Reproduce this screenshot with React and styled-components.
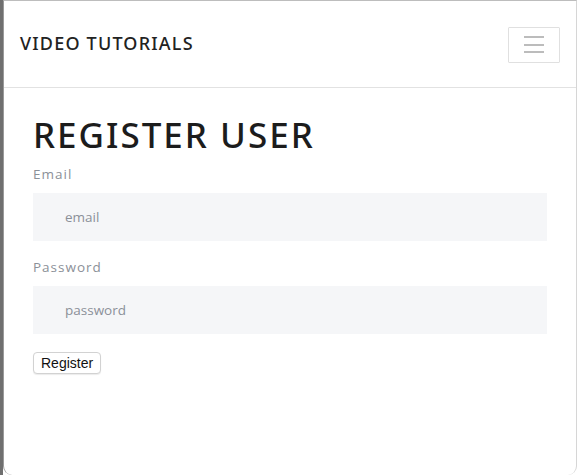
import React from "react";
import styled, { createGlobalStyle } from "styled-components";

const Global = createGlobalStyle`
  html, body { margin: 0; padding: 0; background: #fff; }
  body { font-family: "Open Sans", "Noto Sans", sans-serif; }
  * { box-sizing: border-box; }
`;

const Desk = styled.div`
  display: flex;
  height: 475px;
  width: 577px;
  background: linear-gradient(to right, #6f6f6f 0 3px, #ffffff 3px);
`;

const Win = styled.div`
  flex: 1;
  display: flex;
  flex-direction: column;
  margin-left: 3px;
  border-left: 1px solid #9a9a9a;
  border-top: 1px solid #bdbdbd;
  border-right: 1px solid #d6d6d6;
  border-bottom-left-radius: 9px;
  border-bottom-right-radius: 9px;
  background: #fff;
  overflow: hidden;
`;

const Navbar = styled.nav`
  height: 87px;
  flex: none;
  display: flex;
  align-items: center;
  justify-content: space-between;
  padding: 0 16px;
  border-bottom: 1px solid #e2e2e2;
`;

const Brand = styled.a`
  font-family: "Noto Sans", sans-serif;
  font-size: 18px;
  font-weight: 500;
  letter-spacing: 1.2px;
  color: #222;
  text-decoration: none;
  margin-top: -3px;
`;

const Toggler = styled.button`
  width: 52px;
  height: 36px;
  border: 1px solid #e0e0e0;
  background: #fff;
  border-radius: 1px;
  display: flex;
  flex-direction: column;
  align-items: center;
  justify-content: center;
  gap: 5.5px;
  padding: 0;
  margin-top: 1px;
`;

const Bar = styled.span`
  display: block;
  width: 20px;
  height: 2px;
  background: #bcbcbc;
`;

const Main = styled.main`
  padding: 25px 29px 0 29px;
  display: flex;
  flex-direction: column;
`;

const Title = styled.h1`
  margin: 0 0 8px;
  font-family: "Noto Sans", sans-serif;
  font-size: 35px;
  font-weight: 500;
  letter-spacing: 2px;
  line-height: 44px;
  color: #1c1c1c;
`;

const Label = styled.label`
  display: block;
  font-size: 13.5px;
  letter-spacing: 1px;
  color: #8b9098;
  line-height: 18px;
  margin-bottom: 10px;
`;

const Field = styled.input`
  display: block;
  width: 100%;
  height: 48px;
  border: none;
  background: #f5f6f8;
  padding: 0 32px;
  font-family: "Open Sans", sans-serif;
  font-size: 13.5px;
  color: #333;
  margin-bottom: 17px;
  outline: none;
  &::placeholder { color: #8b9098; }
`;

const Submit = styled.button`
  align-self: flex-start;
  margin-top: 1px;
  height: 22px;
  padding: 0 7px;
  background: #fff;
  border: 1px solid #d2d2d2;
  border-radius: 4px;
  box-shadow: 0 1px 1px rgba(0,0,0,0.08);
  font-family: "Liberation Sans", Arial, sans-serif;
  font-size: 14px;
  color: #111;
`;

export default function App() {
  return (
    <>
      <Global />
      <Desk>
        <Win>
          <Navbar>
            <Brand href="#">VIDEO TUTORIALS</Brand>
            <Toggler aria-label="menu">
              <Bar />
              <Bar />
              <Bar />
            </Toggler>
          </Navbar>
          <Main>
            <Title>REGISTER USER</Title>
            <Label>Email</Label>
            <Field type="email" placeholder="email" />
            <Label>Password</Label>
            <Field type="password" placeholder="password" />
            <Submit>Register</Submit>
          </Main>
        </Win>
      </Desk>
    </>
  );
}
